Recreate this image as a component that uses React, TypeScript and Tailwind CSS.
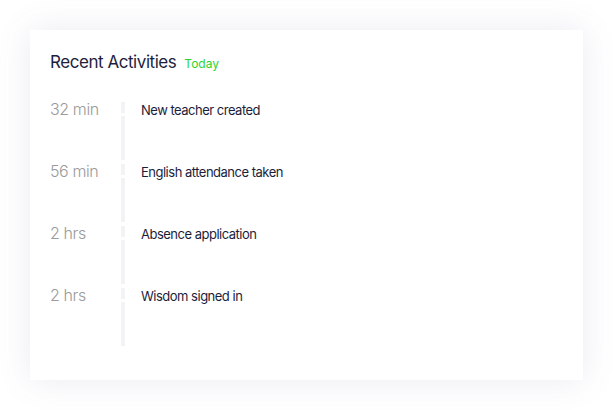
import React from "react";

const activities = [
  { time: "32 min", label: "New teacher created" },
  { time: "56 min", label: "English attendance taken" },
  { time: "2 hrs", label: "Absence application" },
  { time: "2 hrs", label: "Wisdom signed in" },
];

export default function App() {
  return (
    <div className="w-[613px] h-[410px] bg-white p-[30px] font-['Inter',sans-serif]">
      <div className="w-[553px] h-[350px] bg-white shadow-[0_0_32px_rgba(90,100,150,0.13)] px-5 pt-[18px]">
        {/* Header */}
        <div className="flex items-baseline gap-2">
          <h2 className="text-[17px] leading-[28px] text-[#1d1e3c] tracking-[-0.45px]">Recent Activities</h2>
          <span className="text-[12px] text-[#2ed52e]">Today</span>
        </div>

        {/* Timeline */}
        <div className="mt-[26px] flex flex-col">
          {activities.map((a, i) => (
            <div key={i} className="flex">
              <div className="w-[71px] mt-[1px] text-[16px] leading-[12px] font-light text-[#9a9a9a] tracking-[-0.4px]">{a.time}</div>
              <div className="w-1 flex flex-col">
                <div className="h-[11px] bg-[#f3f3f5]" />
                <div className="mt-[3px] h-[44px] bg-[#f3f3f5]" />
                {i < activities.length - 1 && <div className="h-1" />}
              </div>
              <div className="ml-4 mt-[2px] text-[13px] leading-[12px] text-[#1c1d3a] tracking-[-0.5px]">{a.label}</div>
            </div>
          ))}
        </div>
      </div>
    </div>
  );
}
